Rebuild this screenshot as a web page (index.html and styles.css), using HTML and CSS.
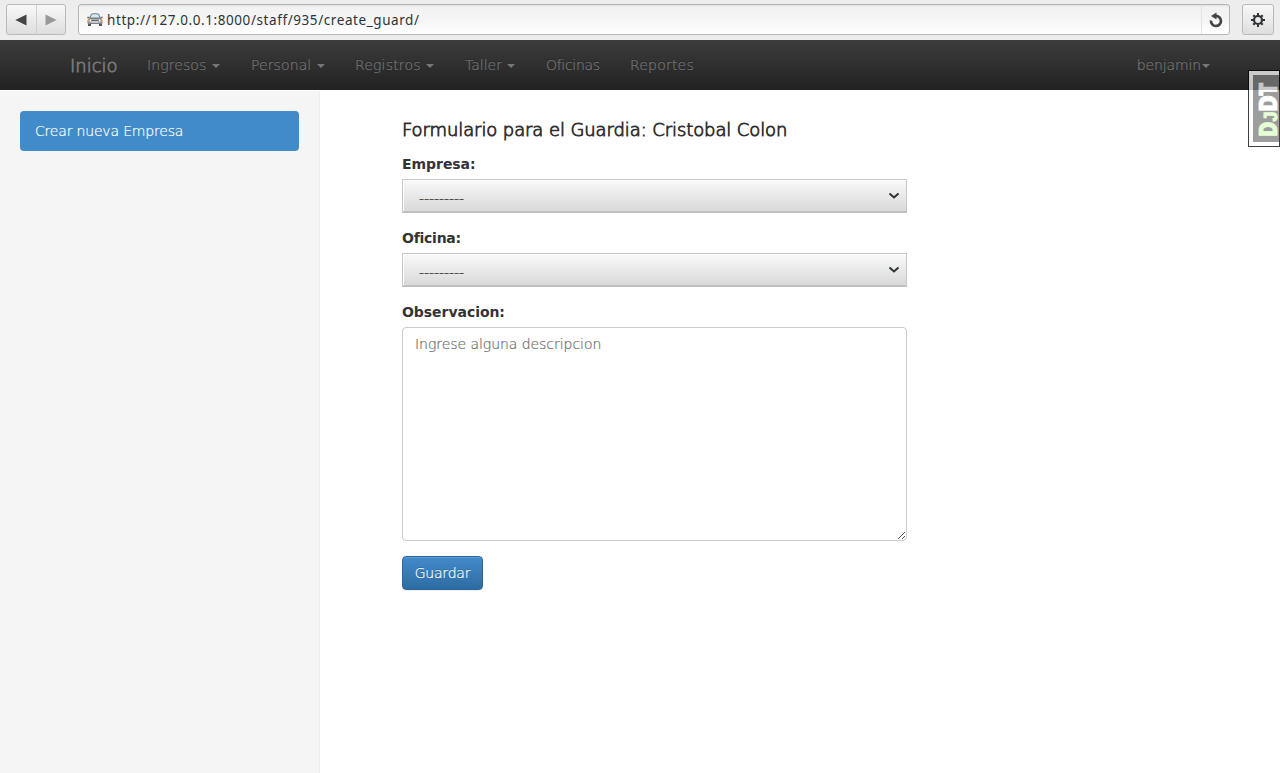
FILE: index.html
```html
<!DOCTYPE html>
<html lang="es">
<head>
<meta charset="utf-8">
<title>Guardia</title>
<link rel="stylesheet" href="styles.css">
</head>
<body>
<header class="toolbar">
  <div class="history">
    <span class="history-btn"><svg width="12" height="12" viewBox="0 0 12 12"><path d="M11.5 0.5V11.5L0.3 6Z" fill="#444"/></svg></span>
    <span class="history-btn forward"><svg width="12" height="12" viewBox="0 0 12 12"><path d="M0.5 0.5V11.5L11.7 6Z" fill="#999"/></svg></span>
  </div>
  <div class="address">
    <svg class="favicon" width="16" height="14" viewBox="0 0 16 14">
      <path d="M3 5L4.400 1Q8 .4 11.600 1L13 5Z" fill="#d3e8f5" stroke="#777d84"/>
      <path d="M.3 4.500H2.500M13.500 4.500H15.700" stroke="#666" stroke-width="1.500"/>
      <path d="M2 5.500H14L15 8V10.500H1V8Z" fill="#a4abb2" stroke="#7c8288"/>
      <path d="M4.500 7.500H11.500" stroke="#666c72"/><path d="M4.500 9H11.500" stroke="#e6eaec"/>
      <path d="M.7 7.500H2.500M13.500 7.500H15.300" stroke="#f3a13b" stroke-width="2"/>
      <path d="M2.800 7.500H4M12 7.500H13.200" stroke="#fff" stroke-width="2"/>
      <path d="M1 11H4V13H1ZM12 11H15V13H12Z" fill="#565656"/>
    </svg>
    <span class="url">http://127.0.0.1:8000/staff/935/create_guard/</span>
    <span class="reload"><svg width="14" height="16" viewBox="0 0 14 16"><path d="M2 8.500A5 5 0 1 0 6.500 4" fill="none" stroke="#444" stroke-width="2.700"/><path d="M2 4L7.500 .5V7.500Z" fill="#444"/></svg></span>
  </div>
  <div class="gear"><svg width="14" height="14" viewBox="-7 -7 14 14"><circle r="4" fill="none" stroke="#2e3436" stroke-width="2.200"/><g stroke="#2e3436" stroke-width="2"><path d="M0-4.500V-7M0 4.500V7M-4.500 0H-7M4.500 0H7"/><path d="M0-4.500V-6.700M0 4.500V6.700M-4.500 0H-6.700M4.500 0H6.700" transform="rotate(45)"/></g></svg></div>
</header>
<nav class="navbar">
  <a class="brand">Inicio</a>
  <a class="nav-item ingresos">Ingresos<i class="caret"></i></a>
  <a class="nav-item personal">Personal<i class="caret"></i></a>
  <a class="nav-item registros">Registros<i class="caret"></i></a>
  <a class="nav-item taller">Taller<i class="caret"></i></a>
  <a class="nav-item oficinas">Oficinas</a>
  <a class="nav-item reportes">Reportes</a>
  <a class="nav-item user">benjamin<i class="caret"></i></a>
</nav>
<div class="page">
  <aside class="sidebar"><a class="side-link">Crear nueva Empresa</a></aside>
  <main class="content">
    <h4 class="title">Formulario para el Guardia: Cristobal Colon</h4>
    <label class="label">Empresa:</label>
    <div class="select"><span class="value">---------</span><svg width="12" height="8" viewBox="0 0 12 8"><path d="M1.500 1.500L6 5.500L10.500 1.500" fill="none" stroke="#2e3436" stroke-width="2"/></svg></div>
    <label class="label oficina">Oficina:</label>
    <div class="select"><span class="value">---------</span><svg width="12" height="8" viewBox="0 0 12 8"><path d="M1.500 1.500L6 5.500L10.500 1.500" fill="none" stroke="#2e3436" stroke-width="2"/></svg></div>
    <label class="label">Observacion:</label>
    <div class="textarea">Ingrese alguna descripcion<svg class="grip" width="9" height="9" viewBox="0 0 9 9"><path d="M1 8L8 1M5 8L8 5" stroke="#555"/></svg></div>
    <button class="save">Guardar</button>
  </main>
</div>
<div class="debug-handle"><div class="debug-face"><svg width="27" height="67" viewBox="0 0 27 67"><g transform="translate(24 61) rotate(-90)"><text class="dj" x="-1" y="0" textLength="15.500" lengthAdjust="spacingAndGlyphs">D</text><text class="dj small" x="14.500" y="0">J</text><text class="dt" x="24" y="0" textLength="17" lengthAdjust="spacingAndGlyphs">D</text><text class="dt" x="40" y="0" textLength="13.500" lengthAdjust="spacingAndGlyphs">T</text></g></svg></div></div>
</body>
</html>
```
FILE: styles.css
```css
* { box-sizing: border-box; }
body { margin: 0; height: 773px; overflow: hidden; background: #fff; color: #333; font: 200 14px/20px "DejaVu Sans Light", "DejaVu Sans", sans-serif; display: flex; flex-direction: column; -webkit-text-stroke: .2px; }
.toolbar { height: 40px; flex: none; background: #ededed; padding: 4px 6px 5px; display: flex; }
.history { width: 60px; height: 31px; border: 1px solid #b8bab8; border-radius: 3px; background: linear-gradient(#f8f8f8, #dedede); display: flex; margin-right: 12px; }
.history-btn { flex: 1; display: flex; align-items: center; justify-content: center; }
.forward { border-left: 1px solid #d0d0d0; }
.address { flex: 1; height: 31px; border: 1px solid #b4b6b4; border-radius: 3px; background: linear-gradient(#dedede 0, #f2f2f2 2px, #f5f5f5 50%, #fff 100%); display: flex; align-items: center; padding-left: 8px; margin-right: 12px; }
.url { font: 400 13.5px/20px "Noto Sans", sans-serif; letter-spacing: .58px; color: #2e3436; margin-left: 4px; white-space: nowrap; -webkit-text-stroke: 0; }
.reload { margin-left: auto; width: 28px; height: 29px; border-left: 1px solid #e4e4e4; display: flex; align-items: center; justify-content: center; }
.gear { width: 32px; height: 31px; border: 1px solid #b8bab8; border-radius: 3px; background: linear-gradient(#f8f8f8, #dedede); display: flex; align-items: center; justify-content: center; }
.navbar { height: 50px; flex: none; background: linear-gradient(#3c3c3c, #222); padding: 0 70px; display: flex; align-items: center; color: #777; text-shadow: 0 -1px 0 rgba(0,0,0,.25); }
.brand { width: 77px; font-size: 18px; padding-top: 2px; -webkit-text-stroke: .8px; }
.nav-item { display: flex; align-items: center; }
.ingresos, .personal { width: 104px; letter-spacing: .1px; }
.registros { width: 110px; letter-spacing: .17px; }
.taller { width: 81px; }
.oficinas { width: 84px; letter-spacing: -.3px; }
.reportes { letter-spacing: .2px; }
.caret { border: 4px solid transparent; border-top-color: #777; border-bottom: 0; margin: 2px 0 0 5.5px; }
.user { margin-left: auto; letter-spacing: -.12px; }
.user .caret { margin-left: 1px; }
.page { flex: 1; display: flex; padding-top: 1px; }
.sidebar { width: 320px; background: #f5f5f5; border-right: 1px solid #eee; padding: 20px; }
.side-link { display: block; height: 40px; background: #428bca; border-radius: 4px; color: #fff; padding: 10px 15px; letter-spacing: -.18px; }
.content { width: 587px; padding: 29px 0 0 82px; }
.title { font-size: 18px; line-height: 20px; font-weight: 200; margin: 0 0 14px; white-space: nowrap; letter-spacing: -.1px; -webkit-text-stroke: .85px; }
.label { display: block; font: 700 14px/20px "DejaVu Sans", sans-serif; letter-spacing: -.05px; height: 20px; margin-bottom: 5px; -webkit-text-stroke: 0; }
.oficina { letter-spacing: -.25px; }
.select { height: 34px; border: 1px solid #c8c8c8; border-bottom: 2px solid #c0c0c0; background: linear-gradient(#fafafa, #d9d9d9); box-shadow: inset 1px 1px 0 #fff; display: flex; align-items: center; justify-content: space-between; padding: 0 6px 0 16px; margin-bottom: 15px; color: #333; }
.value { padding-top: 4px; letter-spacing: -.05px; -webkit-text-stroke: .2px; }
.textarea { position: relative; height: 214px; border: 1px solid #ccc; border-radius: 4px; padding: 6px 12px; color: #6c6c6c; letter-spacing: -.05px; margin-bottom: 15px; }
.grip { position: absolute; right: 0; bottom: 0; }
.save { display: block; width: 81px; height: 34px; border: 1px solid #2b669a; border-radius: 4px; background: linear-gradient(#428bca, #2d6ca2); color: #fff; font: inherit; letter-spacing: -.2px; padding: 0; text-shadow: 0 -1px 0 rgba(0,0,0,.2); box-shadow: inset 0 1px 0 rgba(255,255,255,.15), 0 1px 1px rgba(0,0,0,.075); }
.debug-handle { position: absolute; right: 0; top: 70px; width: 32px; height: 77px; border: 1px solid #000; background: #fff; opacity: .75; padding: 4px 0 4px 4px; -webkit-text-stroke: 0; }
.debug-face { height: 67px; background: #7d7d7d; }
.debug-face svg { display: block; overflow: visible; }
.dj, .dt { font: 800 24px "Open Sans", sans-serif; fill: #e0ffc8; stroke: #e0ffc8; stroke-width: .7px; }
.small { font: 700 18px "Liberation Sans", sans-serif; stroke-width: 1px; }
.dt { fill: #fff; stroke: #fff; }
```
